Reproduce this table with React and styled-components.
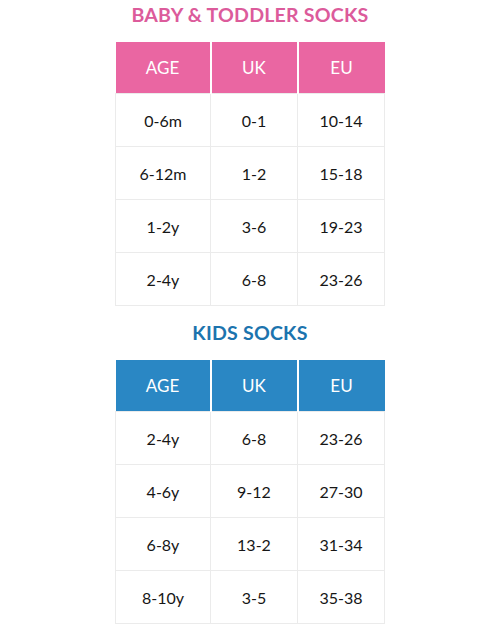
import styled, { createGlobalStyle } from "styled-components";

const GlobalStyle = createGlobalStyle`
  body {
    margin: 0;
    background: #ffffff;
    font-family: Lato, "Open Sans", sans-serif;
  }
`;

const charts = [
  {
    title: "BABY & TODDLER SOCKS",
    accent: "#ea66a2",
    titleColor: "#dc5b9b",
    rows: [
      ["0-6m", "0-1", "10-14"],
      ["6-12m", "1-2", "15-18"],
      ["1-2y", "3-6", "19-23"],
      ["2-4y", "6-8", "23-26"],
    ],
  },
  {
    title: "KIDS SOCKS",
    accent: "#2a87c4",
    titleColor: "#1c74ae",
    rows: [
      ["2-4y", "6-8", "23-26"],
      ["4-6y", "9-12", "27-30"],
      ["6-8y", "13-2", "31-34"],
      ["8-10y", "3-5", "35-38"],
    ],
  },
];

function App() {
  return (
    <Page>
      <GlobalStyle />
      {charts.map(chart => (
        <Section key={chart.title}>
          <Title color={chart.titleColor}>{chart.title}</Title>
          <Table>
            <colgroup>
              <col style={{ width: 95 }} />
              <col style={{ width: 87 }} />
              <col style={{ width: 87 }} />
            </colgroup>
            <thead>
              <tr>
                <HeadCell accent={chart.accent}>AGE</HeadCell>
                <HeadCell accent={chart.accent}>UK</HeadCell>
                <HeadCell accent={chart.accent}>EU</HeadCell>
              </tr>
            </thead>
            <tbody>
              {chart.rows.map(row => (
                <tr key={row[0]}>
                  {row.map((value, i) => (
                    <Cell key={i}>{value}</Cell>
                  ))}
                </tr>
              ))}
            </tbody>
          </Table>
        </Section>
      ))}
    </Page>
  );
}

const Page = styled.div`
  display: flex;
  flex-direction: column;
  align-items: center;
  gap: 12px;
`;

const Section = styled.div`
  display: flex;
  flex-direction: column;
  align-items: center;
  gap: 12px;
`;

const Title = styled.h2`
  margin: 0;
  height: 30px;
  line-height: 30px;
  font-size: 19.6px;
  font-weight: 700;
  letter-spacing: 0.2px;
  color: ${props => props.color};
`;

const Table = styled.table`
  width: 269px;
  table-layout: fixed;
  border-collapse: collapse;
`;

const HeadCell = styled.th`
  height: 51px;
  padding: 0;
  background: ${props => props.accent};
  color: #ffffff;
  font-size: 17px;
  font-weight: 400;
  text-align: center;
  border-left: 2px solid #ffffff;

  &:first-child {
    border-left: none;
  }
`;

const Cell = styled.td`
  height: 52px;
  padding: 0;
  text-align: center;
  font-size: 16px;
  color: #161616;
  border: 1px solid #ebebeb;
`;

export default App;
